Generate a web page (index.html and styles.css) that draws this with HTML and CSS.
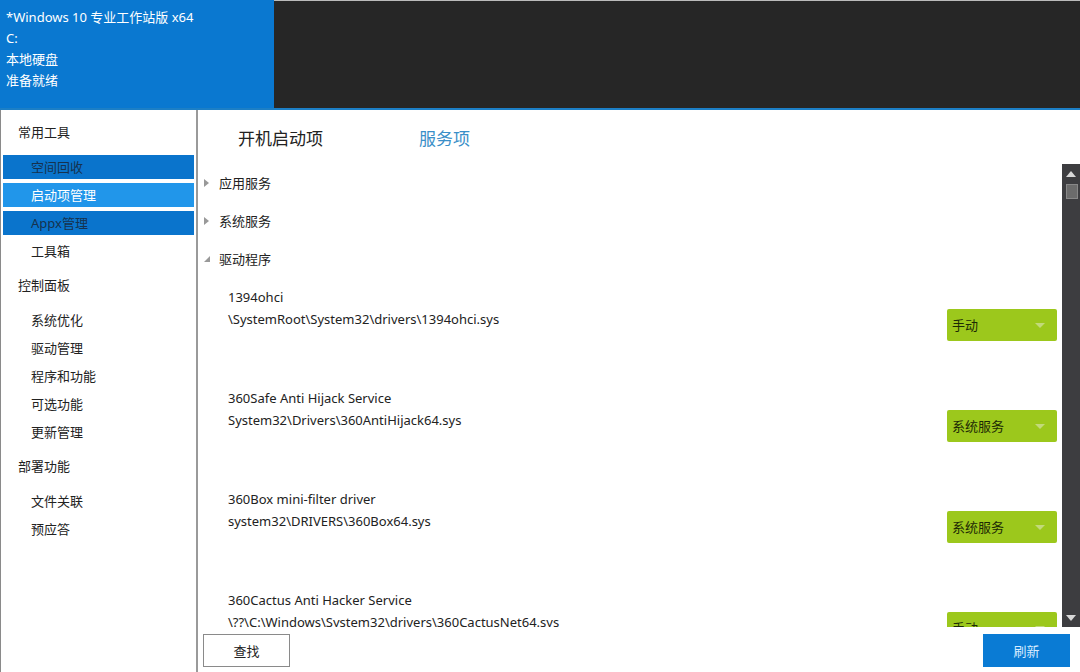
FILE: index.html
```html
<!DOCTYPE html>
<html lang="zh-CN">
<head>
    <meta charset="UTF-8">
    <title>启动项管理</title>
    <link rel="stylesheet" href="styles.css">
</head>
<body>

<div class="header">
    <div class="sysinfo">
        <div>*Windows 10 专业工作站版 x64</div>
        <div>C:</div>
        <div>本地硬盘</div>
        <div>准备就绪</div>
    </div>
    <div class="header-dark"></div>
</div>

<div class="app">
    <div class="sidebar">
        <div class="group-title">常用工具</div>
        <div class="nav-item sel">空间回收</div>
        <div class="nav-item active">启动项管理</div>
        <div class="nav-item sel">Appx管理</div>
        <div class="nav-item">工具箱</div>

        <div class="group-title">控制面板</div>
        <div class="nav-item">系统优化</div>
        <div class="nav-item">驱动管理</div>
        <div class="nav-item">程序和功能</div>
        <div class="nav-item">可选功能</div>
        <div class="nav-item">更新管理</div>

        <div class="group-title">部署功能</div>
        <div class="nav-item">文件关联</div>
        <div class="nav-item">预应答</div>
    </div>

    <div class="main">
        <div class="tabs">
            <div class="tab">开机启动项</div>
            <div class="tab current">服务项</div>
        </div>

        <div class="scroll-area">
            <div class="list">
                <div class="tree-row"><span class="arrow closed"></span>应用服务</div>
                <div class="tree-row"><span class="arrow closed"></span>系统服务</div>
                <div class="tree-row"><span class="arrow open"></span>驱动程序</div>

                <div class="entry">
                    <div class="entry-text">
                        <div>1394ohci</div>
                        <div>\SystemRoot\System32\drivers\1394ohci.sys</div>
                    </div>
                    <div class="dropdown">手动<span class="caret"></span></div>
                </div>
                <div class="entry">
                    <div class="entry-text">
                        <div>360Safe Anti Hijack Service</div>
                        <div>System32\Drivers\360AntiHijack64.sys</div>
                    </div>
                    <div class="dropdown">系统服务<span class="caret"></span></div>
                </div>
                <div class="entry">
                    <div class="entry-text">
                        <div>360Box mini-filter driver</div>
                        <div>system32\DRIVERS\360Box64.sys</div>
                    </div>
                    <div class="dropdown">系统服务<span class="caret"></span></div>
                </div>
                <div class="entry">
                    <div class="entry-text">
                        <div>360Cactus Anti Hacker Service</div>
                        <div>\??\C:\Windows\System32\drivers\360CactusNet64.sys</div>
                    </div>
                    <div class="dropdown">手动<span class="caret"></span></div>
                </div>
            </div>

            <div class="scrollbar">
                <span class="sb-up"></span>
                <span class="sb-thumb"></span>
                <span class="sb-down"></span>
            </div>
        </div>

        <div class="bottom-bar">
            <button class="btn">查找</button>
            <button class="btn primary">刷新</button>
        </div>
    </div>
</div>

</body>
</html>
```

FILE: styles.css
```css
html, body {
    margin: 0;
    height: 100%;
}
body {
    font-family: "Noto Sans", "Noto Sans CJK SC", sans-serif;
    font-size: 13px;
    color: #222;
    background: #fff;
    display: flex;
    flex-direction: column;
    overflow: hidden;
}
.header {
    display: flex;
    height: 108px;
    border-bottom: 2px solid #1c7fc6;
    flex-shrink: 0;
}
.sysinfo {
    width: 268px;
    background: #0a78d0;
    color: #fff;
    padding: 7px 0 0 6px;
    line-height: 21px;
}
.header-dark {
    flex: 1;
    background: #262626;
    border-top: 1px solid #bbb;
}
.app {
    flex: 1;
    display: flex;
    min-height: 0;
}
.sidebar {
    width: 191px;
    border-left: 1px solid #8a8a8a;
    border-right: 2px solid #9a9a9a;
    padding: 0 2px;
    flex-shrink: 0;
}
.group-title {
    height: 24px;
    line-height: 24px;
    margin: 10px 0 11px;
    padding-left: 15px;
}
.nav-item {
    height: 24px;
    line-height: 24px;
    margin-top: 4px;
    padding-left: 28px;
}
.nav-item.sel {
    background: #0a74cc;
    color: #16324e;
}
.nav-item.active {
    background: #2196ea;
    color: #fff;
}
.main {
    flex: 1;
    display: flex;
    flex-direction: column;
    min-width: 0;
}
.tabs {
    height: 54px;
    display: flex;
    align-items: center;
    gap: 96px;
    padding-left: 40px;
    flex-shrink: 0;
}
.tab {
    font-size: 17px;
    color: #222;
}
.tab.current {
    color: #3a8fc8;
}
.scroll-area {
    flex: 1;
    display: flex;
    min-height: 0;
    overflow: hidden;
}
.list {
    flex: 1;
    overflow: hidden;
    padding-top: 1px;
}
.tree-row {
    height: 38px;
    line-height: 36px;
    padding-left: 21px;
    position: relative;
}
.arrow {
    position: absolute;
    left: 6px;
    top: 14px;
}
.arrow.closed {
    border-left: 5px solid #999;
    border-top: 4px solid transparent;
    border-bottom: 4px solid transparent;
}
.arrow.open {
    top: 15px;
    border-right: 6px solid #999;
    border-top: 6px solid transparent;
}
.entry {
    height: 101px;
    display: flex;
    justify-content: space-between;
    padding-right: 5px;
}
.entry-text {
    padding: 7px 0 0 30px;
    line-height: 22px;
}
.dropdown {
    width: 105px;
    height: 32px;
    line-height: 32px;
    margin-top: 30px;
    padding-left: 5px;
    background: #9cc81c;
    border-radius: 2px;
    position: relative;
    color: #1d2a05;
}
.caret {
    position: absolute;
    right: 12px;
    top: 14px;
    border-top: 5px solid #c2da7a;
    border-left: 5px solid transparent;
    border-right: 5px solid transparent;
}
.scrollbar {
    width: 18px;
    background: #3d3d40;
    position: relative;
    flex-shrink: 0;
}
.sb-up, .sb-down {
    position: absolute;
    left: 4px;
    border-left: 5px solid transparent;
    border-right: 5px solid transparent;
}
.sb-up {
    top: 7px;
    border-bottom: 6px solid #d8d8d8;
}
.sb-down {
    bottom: 6px;
    border-top: 6px solid #d8d8d8;
}
.sb-thumb {
    position: absolute;
    left: 4px;
    top: 20px;
    width: 10px;
    height: 13px;
    background: #6c6c6c;
    border: 1px solid #888;
}
.bottom-bar {
    height: 45px;
    display: flex;
    justify-content: space-between;
    align-items: center;
    padding: 0 10px 0 5px;
    flex-shrink: 0;
}
.btn {
    width: 87px;
    height: 33px;
    font-family: inherit;
    font-size: 13px;
    background: #fff;
    border: 1px solid #8a8a8a;
    color: #222;
    margin-top: 1px;
}
.btn.primary {
    background: #0a7bd4;
    border-color: #0a7bd4;
    color: #d6ebff;
}
```
